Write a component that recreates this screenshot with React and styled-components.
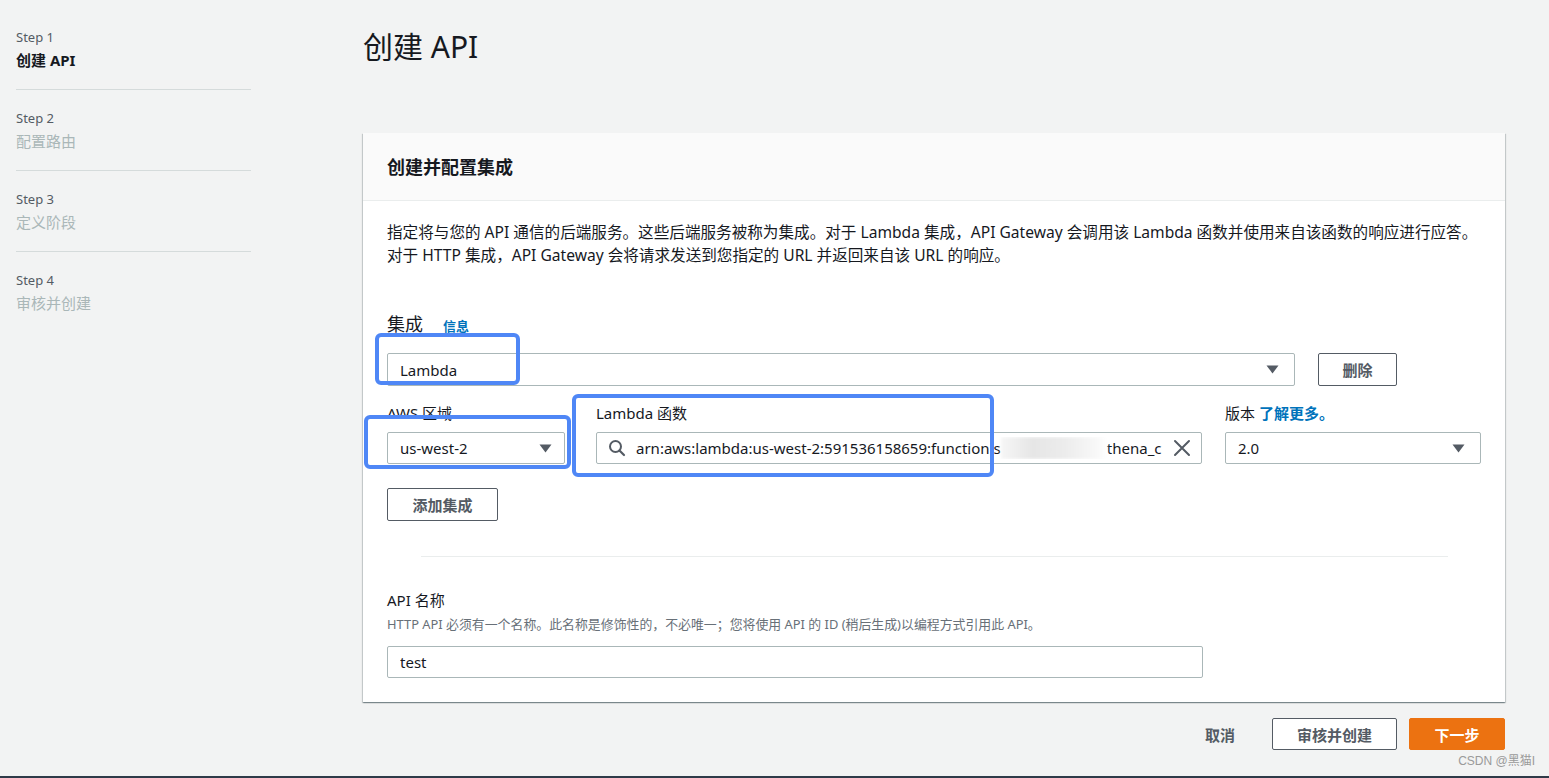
import React from "react";
import styled, { createGlobalStyle } from "styled-components";

const Global = createGlobalStyle`
  html, body { margin: 0; padding: 0; }
  body {
    background: #f2f3f3;
    font-family: "Noto Sans", "Noto Sans CJK SC", sans-serif;
    color: #16191f;
    font-size: 15px;
  }
  * { box-sizing: border-box; }
`;

const Page = styled.div`
  position: relative;
  display: flex;
  width: 1549px;
  height: 778px;
  border-bottom: 2px solid #2f3a48;
  overflow: hidden;
`;

const Nav = styled.nav`
  width: 235px;
  margin-left: 16px;
  padding-top: 9px;
  flex-shrink: 0;
`;

const StepItem = styled.div`
  padding: 18px 0 16px;
  border-bottom: ${(p) => (p.$last ? "none" : "1px solid #d5dbdb")};
`;

const StepLabel = styled.div`
  font-size: 13px;
  line-height: 20px;
  color: #545b64;
`;

const StepTitle = styled.div`
  font-size: 15px;
  line-height: 26px;
  font-weight: ${(p) => (p.$active ? 700 : 400)};
  color: ${(p) => (p.$active ? "#16191f" : "#aab7b8")};
`;

const Main = styled.main`
  width: 1142px;
  margin-left: 112px;
  display: flex;
  flex-direction: column;
`;

const PageTitle = styled.h1`
  margin: 28px 0 67px;
  font-size: 30px;
  line-height: 38px;
  font-weight: 400;
  color: #16191f;
`;

const Card = styled.section`
  background: #fff;
  box-shadow: 0 1px 1px 0 rgba(0, 28, 36, 0.3), 1px 1px 1px 0 rgba(0, 28, 36, 0.15),
    -1px 1px 1px 0 rgba(0, 28, 36, 0.15);
`;

const CardHeader = styled.header`
  height: 68px;
  display: flex;
  align-items: center;
  padding: 0 24px;
  background: #fafafa;
  border-bottom: 1px solid #eaeded;
`;

const CardTitle = styled.h2`
  margin: 0;
  font-size: 18px;
  font-weight: 700;
  line-height: 24px;
`;

const CardBody = styled.div`
  padding: 20px 24px 24px;
`;

const Desc = styled.p`
  margin: 0;
  font-size: 15.6px;
  line-height: 23px;
`;

const SectionLabel = styled.div`
  margin-top: 44px;
  display: flex;
  align-items: baseline;
  gap: 20px;
  line-height: 26px;
`;

const BigLabel = styled.span`
  font-size: 18px;
`;

const InfoLink = styled.a`
  font-size: 13px;
  font-weight: 700;
  color: #0073bb;
  text-decoration: none;
`;

const Row = styled.div`
  display: flex;
  align-items: ${(p) => p.$align || "flex-start"};
  gap: ${(p) => p.$gap || 0}px;
  margin-top: ${(p) => p.$mt || 0}px;
`;

const Field = styled.div`
  width: ${(p) => p.$w}px;
  flex-shrink: 0;
`;

const FieldLabel = styled.div`
  font-size: 15px;
  line-height: 22px;
  margin-bottom: 8px;
`;

const BlueLink = styled.span`
  color: #0073bb;
  font-weight: 700;
`;

const Control = styled.div`
  width: ${(p) => (p.$w ? `${p.$w}px` : "100%")};
  height: ${(p) => p.$h || 32}px;
  border: 1px solid #aab7b8;
  border-radius: 2px;
  background: #fff;
  display: flex;
  align-items: center;
  padding: 0 ${(p) => p.$pr || 12}px 0 ${(p) => p.$pl || 12}px;
  font-size: 15px;
  color: #16191f;
  gap: 10px;
`;

const ControlText = styled.span`
  flex: 1;
  white-space: nowrap;
  overflow: hidden;
  display: flex;
  align-items: center;
`;

const Blur = styled.span`
  display: inline-block;
  width: 106px;
  height: 22px;
  flex-shrink: 0;
  background: linear-gradient(90deg, #f6f6f6, #e6e6e6 30%, #ececec 60%, #f8f8f8 90%, #fff);
  filter: blur(1.5px);
`;

const Button = styled.button`
  height: ${(p) => p.$h || 33}px;
  width: ${(p) => (p.$w ? `${p.$w}px` : "auto")};
  padding: 0 ${(p) => p.$px ?? 18}px;
  border-radius: 2px;
  border: ${(p) =>
    p.$variant === "primary"
      ? "1px solid #ec7211"
      : p.$variant === "text"
      ? "1px solid transparent"
      : "1px solid #545b64"};
  background: ${(p) =>
    p.$variant === "primary" ? "#ec7211" : p.$variant === "text" ? "transparent" : "#fff"};
  color: ${(p) => (p.$variant === "primary" ? "#fff" : "#545b64")};
  font-family: inherit;
  font-size: 15px;
  font-weight: 700;
  cursor: pointer;
  flex-shrink: 0;
`;

const Divider = styled.hr`
  margin: 35px 33px 0 34px;
  border: 0;
  border-top: 1px solid #eaeded;
`;

const NameLabel = styled.div`
  margin-top: 32px;
  font-size: 15px;
  line-height: 22px;
`;

const Hint = styled.div`
  margin-top: 4px;
  font-size: 12.9px;
  line-height: 18px;
  color: #687078;
`;

const Footer = styled.div`
  display: flex;
  justify-content: flex-end;
  gap: 12px;
  margin-top: 16px;
`;

const Mark = styled.div`
  position: absolute;
  left: ${(p) => p.$x}px;
  top: ${(p) => p.$y}px;
  width: ${(p) => p.$w}px;
  height: ${(p) => p.$h}px;
  border: 4px solid #4f87f6;
  border-radius: 6px;
  pointer-events: none;
`;

const Watermark = styled.div`
  position: absolute;
  right: 14px;
  bottom: 8px;
  font-size: 12px;
  color: #9a9a9a;
  font-family: "Liberation Sans", "Noto Sans CJK SC", sans-serif;
`;

const Caret = () => (
  <svg width="13" height="9" viewBox="0 0 13 9">
    <path d="M0.5 0.5 L12.5 0.5 L6.5 8.5 Z" fill="#545b64" />
  </svg>
);

const SearchIcon = () => (
  <svg width="18" height="18" viewBox="0 0 18 18" style={{ flexShrink: 0 }}>
    <circle cx="7.5" cy="7.5" r="5.5" fill="none" stroke="#545b64" strokeWidth="2" />
    <line x1="11.5" y1="11.5" x2="16" y2="16" stroke="#545b64" strokeWidth="2.2" strokeLinecap="round" />
  </svg>
);

const ClearIcon = () => (
  <svg width="18" height="18" viewBox="0 0 18 18" style={{ flexShrink: 0 }}>
    <path d="M2 2 L16 16 M16 2 L2 16" stroke="#545b64" strokeWidth="2" strokeLinecap="round" />
  </svg>
);

const steps = [
  { n: 1, t: "创建 API", active: true },
  { n: 2, t: "配置路由" },
  { n: 3, t: "定义阶段" },
  { n: 4, t: "审核并创建" },
];

export default function App() {
  return (
    <>
      <Global />
      <Page>
        <Nav>
          {steps.map((s, i) => (
            <StepItem key={s.n} $last={i === steps.length - 1}>
              <StepLabel>Step {s.n}</StepLabel>
              <StepTitle $active={s.active}>{s.t}</StepTitle>
            </StepItem>
          ))}
        </Nav>
        <Main>
          <PageTitle>创建 API</PageTitle>
          <Card>
            <CardHeader>
              <CardTitle>创建并配置集成</CardTitle>
            </CardHeader>
            <CardBody>
              <Desc>
                指定将与您的 API 通信的后端服务。这些后端服务被称为集成。对于 Lambda 集成，API Gateway 会调用该 Lambda 函数并使用来自该函数的响应进行应答。
                <br />
                对于 HTTP 集成，API Gateway 会将请求发送到您指定的 URL 并返回来自该 URL 的响应。
              </Desc>

              <SectionLabel>
                <BigLabel>集成</BigLabel>
                <InfoLink href="#">信息</InfoLink>
              </SectionLabel>

              <Row $mt={14} $gap={23}>
                <Control $w={908} $h={33} $pr={15}>
                  <ControlText>Lambda</ControlText>
                  <Caret />
                </Control>
                <Button $w={79}>删除</Button>
              </Row>

              <Row $mt={16} $gap={0}>
                <Field $w={178}>
                  <FieldLabel>AWS 区域</FieldLabel>
                  <Control $pr={12}>
                    <ControlText>us-west-2</ControlText>
                    <Caret />
                  </Control>
                </Field>
                <Field $w={606} style={{ marginLeft: 31 }}>
                  <FieldLabel>Lambda 函数</FieldLabel>
                  <Control $pl={11} $pr={10}>
                    <SearchIcon />
                    <ControlText>
                      arn:aws:lambda:us-west-2:591536158659:function:s
                      <Blur />
                      thena_c
                    </ControlText>
                    <ClearIcon />
                  </Control>
                </Field>
                <Field $w={256} style={{ marginLeft: 23 }}>
                  <FieldLabel>
                    版本 <BlueLink>了解更多。</BlueLink>
                  </FieldLabel>
                  <Control $pr={15}>
                    <ControlText>2.0</ControlText>
                    <Caret />
                  </Control>
                </Field>
              </Row>

              <Row $mt={24}>
                <Button $w={111}>添加集成</Button>
              </Row>

              <Divider />

              <NameLabel>API 名称</NameLabel>
              <Hint>
                HTTP API 必须有一个名称。此名称是修饰性的，不必唯一；您将使用 API 的 ID (稍后生成)以编程方式引用此 API。
              </Hint>
              <Row $mt={13}>
                <Control $w={816}>
                  <ControlText>test</ControlText>
                </Control>
              </Row>
            </CardBody>
          </Card>
          <Footer>
            <Button $variant="text" $px={24} $h={32}>取消</Button>
            <Button $w={125} $h={32}>审核并创建</Button>
            <Button $variant="primary" $w={96} $h={32}>下一步</Button>
          </Footer>
        </Main>

        <Mark $x={375} $y={333} $w={145} $h={52} />
        <Mark $x={364} $y={415} $w={207} $h={54} />
        <Mark $x={572} $y={394} $w={422} $h={83} />
        <Watermark>CSDN @黑猫I</Watermark>
      </Page>
    </>
  );
}
